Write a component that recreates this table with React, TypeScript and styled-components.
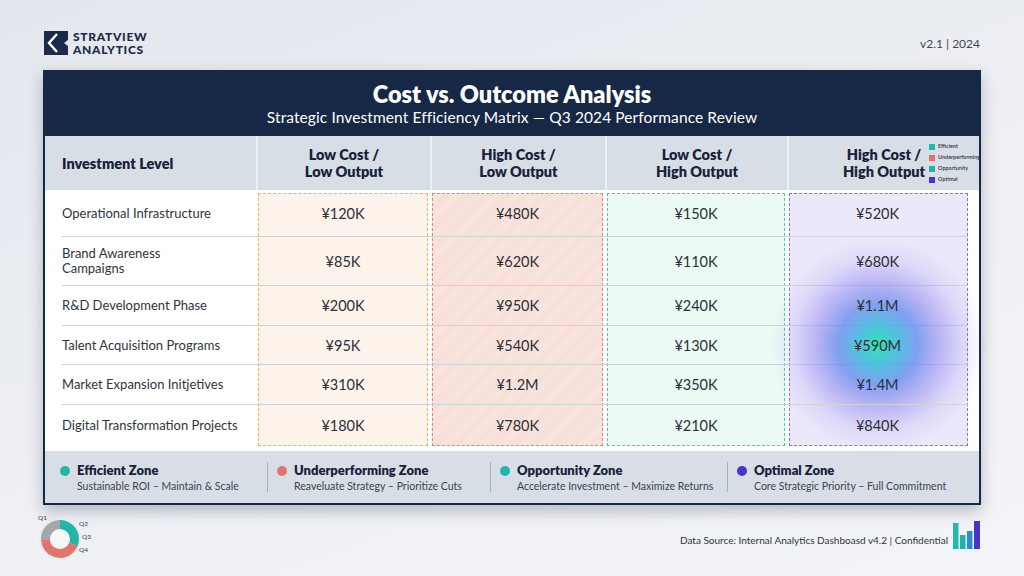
import { Fragment } from "react";
import styled, { createGlobalStyle } from "styled-components";

const GlobalStyle = createGlobalStyle`
  html, body {
    margin: 0;
    padding: 0;
  }
  body {
    font-family: "Lato", "Open Sans", sans-serif;
    background: linear-gradient(160deg, #e3e7ee 0%, #eef0f4 55%, #f3f4f7 100%);
  }
`;

const Page = styled.div`
  width: 1024px;
  height: 576px;
  box-sizing: border-box;
  padding: 30px 43px 0 43px;
  display: flex;
  flex-direction: column;
  overflow: hidden;
`;

const TopBar = styled.div`
  display: flex;
  justify-content: space-between;
  align-items: center;
  height: 25px;
  padding-left: 1px;
`;

const Brand = styled.div`
  display: flex;
  align-items: center;
  gap: 5px;
`;

const BrandName = styled.div`
  font-weight: 900;
  font-size: 12px;
  line-height: 13px;
  color: #1b2a48;
  letter-spacing: 0.7px;
`;

const Version = styled.div`
  font-size: 12px;
  color: #3f4652;
  padding-right: 1px;
  padding-top: 1px;
`;

const Card = styled.div`
  margin-top: 15px;
  border: 2px solid #172746;
  background: #ffffff;
  box-shadow: 0 6px 14px rgba(30, 40, 70, 0.28);
  display: flex;
  flex-direction: column;
`;

const CardHead = styled.div`
  background: #172746;
  color: #ffffff;
  text-align: center;
  padding: 9px 0 9px;
`;

const Title = styled.div`
  font-weight: 800;
  font-size: 23.5px;
  line-height: 26px;
`;

const Subtitle = styled.div`
  font-size: 15.5px;
  line-height: 20px;
  letter-spacing: 0.1px;
`;

const COLS = "211px 174px 175px 182px 1fr";

const HeadRow = styled.div`
  display: grid;
  grid-template-columns: ${COLS};
  background: #d8dee5;
  height: 54px;
`;

const HeadCell = styled.div<{ $first?: boolean }>`
  position: relative;
  display: flex;
  align-items: center;
  justify-content: ${(p) => (p.$first ? "flex-start" : "center")};
  padding-left: ${(p) => (p.$first ? "17px" : "0")};
  border-left: ${(p) => (p.$first ? "none" : "2px solid #eef1f4")};
  font-weight: 800;
  font-size: 14.5px;
  line-height: 17px;
  color: #18223a;
  text-align: center;
`;

const MiniLegend = styled.div`
  position: absolute;
  left: 140px;
  top: 7px;
  display: flex;
  flex-direction: column;
  gap: 4px;
`;

const MiniItem = styled.div`
  display: flex;
  align-items: center;
  gap: 3px;
  font-size: 5.5px;
  line-height: 7px;
  font-weight: 600;
  color: #2d3344;
  white-space: nowrap;
  text-align: left;
`;

const MiniSwatch = styled.span<{ $c: string }>`
  width: 6px;
  height: 6px;
  background: ${(p) => p.$c};
  flex: none;
`;

const Body = styled.div`
  display: grid;
  grid-template-columns: ${COLS};
  grid-template-rows: 47px 49px 40px 39px 40px 40px;
  padding-bottom: 6px;
`;

type Zone = "low" | "bad" | "opp" | "opt";

const zoneStyle: Record<Zone, { bg: string; line: string }> = {
  low: { bg: "#fdf3ea", line: "#f3b546" },
  bad: {
    bg: "repeating-linear-gradient(135deg, #f9e3dd 0 7px, #f8e0da 7px 14px)",
    line: "#e7847a",
  },
  opp: { bg: "#ebfbf4", line: "#45cdb9" },
  opt: { bg: "#ece8fb", line: "#8c6de2" },
};

const ZoneBox = styled.div<{ $zone: Zone; $col: number }>`
  grid-column: ${(p) => p.$col};
  grid-row: 1 / -1;
  margin: 3px ${(p) => (p.$col === 5 ? "11px" : "2px")} -1px 2px;
  background: ${(p) => zoneStyle[p.$zone].bg};
  border: 1.5px dashed ${(p) => zoneStyle[p.$zone].line};
`;

const LabelCell = styled.div<{ $row: number; $last?: boolean }>`
  grid-column: 1;
  grid-row: ${(p) => p.$row};
  margin-left: 17px;
  display: flex;
  align-items: center;
  font-size: 13px;
  line-height: 15px;
  color: #30343c;
  border-bottom: ${(p) => (p.$last ? "none" : "1.5px solid #cfd4da")};
`;

const ValueCell = styled.div<{ $row: number; $col: number; $last?: boolean; $glow?: boolean }>`
  grid-column: ${(p) => p.$col};
  grid-row: ${(p) => p.$row};
  position: relative;
  display: flex;
  align-items: center;
  justify-content: center;
  font-size: 14.5px;
  color: #2b2f38;
  border-bottom: ${(p) => (p.$last ? "none" : "1.5px solid #cfd4da")};
  margin-right: ${(p) => (p.$col === 5 ? "11px" : "0")};

  ${(p) =>
    p.$glow &&
    `
    &::before {
      content: "";
      position: absolute;
      z-index: 0;
      left: 50%;
      top: 50%;
      width: 220px;
      height: 220px;
      transform: translate(-50%, -50%);
      border-radius: 50%;
      background: radial-gradient(circle at center,
        rgba(40, 228, 170, 0.95) 0px,
        rgba(55, 185, 220, 0.85) 20px,
        rgba(80, 125, 235, 0.68) 40px,
        rgba(110, 105, 235, 0.4) 62px,
        rgba(135, 120, 235, 0.15) 85px,
        rgba(140, 120, 235, 0) 108px);
      pointer-events: none;
    }
  `}
`;

const ValueText = styled.span`
  position: relative;
  z-index: 1;
`;

const Legend = styled.div`
  display: grid;
  grid-template-columns: 222px 223px 237px 1fr;
  align-items: center;
  background: #d8dee5;
  height: 52px;
`;

const LegendItem = styled.div<{ $first?: boolean }>`
  display: flex;
  align-items: flex-start;
  gap: 7px;
  height: 30px;
  box-sizing: border-box;
  padding-left: ${(p) => (p.$first ? "15px" : "9px")};
  border-left: ${(p) => (p.$first ? "none" : "1.5px solid #a9b0ba")};
  padding-top: 1px;
`;

const Dot = styled.span<{ $c: string }>`
  width: 10px;
  height: 10px;
  border-radius: 50%;
  background: ${(p) => p.$c};
  margin-top: 3px;
  flex: none;
`;

const LegendTitle = styled.div`
  font-weight: 800;
  font-size: 13px;
  line-height: 15px;
  color: #18223a;
`;

const LegendSub = styled.div`
  font-size: 10.5px;
  line-height: 14px;
  color: #3d4350;
  margin-top: 1px;
`;

const Footer = styled.div`
  display: flex;
  justify-content: space-between;
  align-items: flex-start;
  margin-top: 8px;
  margin-left: -6px;
`;

const SourceRow = styled.div`
  display: flex;
  align-items: flex-end;
  gap: 5px;
  margin-top: 8px;
`;

const Source = styled.div`
  font-size: 10px;
  color: #2f3440;
  padding-bottom: 3px;
`;

const rows = [
  { label: ["Operational Infrastructure"], v: ["¥120K", "¥480K", "¥150K", "¥520K"] },
  { label: ["Brand Awareness", "Campaigns"], v: ["¥85K", "¥620K", "¥110K", "¥680K"] },
  { label: ["R&D Development Phase"], v: ["¥200K", "¥950K", "¥240K", "¥1.1M"] },
  { label: ["Talent Acquisition Programs"], v: ["¥95K", "¥540K", "¥130K", "¥590M"] },
  { label: ["Market Expansion Initjetives"], v: ["¥310K", "¥1.2M", "¥350K", "¥1.4M"] },
  { label: ["Digital Transformation Projects"], v: ["¥180K", "¥780K", "¥210K", "¥840K"] },
];

const zones: Zone[] = ["low", "bad", "opp", "opt"];

const legend = [
  { c: "#22b5a6", t: "Efficient Zone", s: "Sustainable ROI – Maintain & Scale" },
  { c: "#e07570", t: "Underperforming Zone", s: "Reaveluate Strategy – Prioritize Cuts" },
  { c: "#22b5ad", t: "Opportunity Zone", s: "Accelerate Investment – Maximize Returns" },
  { c: "#4b33c9", t: "Optimal Zone", s: "Core Strategic Priority – Full Commitment" },
];

const mini = [
  { c: "#21b9aa", t: "Efficient" },
  { c: "#e2736b", t: "Underperforming" },
  { c: "#20b3ad", t: "Opportunity" },
  { c: "#4a34c8", t: "Optimal" },
];

function Logo() {
  return (
    <svg width="24" height="24" viewBox="0 0 24 24">
      <path d="M0 0 H24 V9 L20 12 L24 15 V24 H0 Z" fill="#1b2a48" />
      <path d="M13 3 L5 12 L13 21" fill="none" stroke="#ffffff" strokeWidth="2.4" strokeLinejoin="miter" />
    </svg>
  );
}

function Donut() {
  const r = 14.5;
  const c = 2 * Math.PI * r;
  const seg = (from: number, to: number, color: string) => (
    <circle
      cx="23"
      cy="26"
      r={r}
      fill="none"
      stroke={color}
      strokeWidth="9"
      strokeDasharray={`${((to - from) / 360) * c} ${c}`}
      transform={`rotate(${from - 90} 23 26)`}
    />
  );
  return (
    <svg width="62" height="48" viewBox="0 0 62 48">
      <circle cx="23" cy="26" r="20" fill="#f6f7f9" stroke="#e2e5ea" strokeWidth="1" />
      {seg(0, 112, "#22b5a6")}
      {seg(112, 268, "#e07570")}
      {seg(268, 360, "#a3a6ab")}
      <text x="1" y="7" fontSize="6.5" fill="#3a3f48" fontFamily="Lato, sans-serif">Q1</text>
      <text x="42" y="13" fontSize="6.5" fill="#3a3f48" fontFamily="Lato, sans-serif">Q2</text>
      <text x="45" y="26" fontSize="6.5" fill="#3a3f48" fontFamily="Lato, sans-serif">Q3</text>
      <text x="42" y="39" fontSize="6.5" fill="#3a3f48" fontFamily="Lato, sans-serif">Q4</text>
    </svg>
  );
}

function Bars() {
  return (
    <svg width="28" height="28" viewBox="0 0 28 28">
      <rect x="0" y="2" width="5.5" height="26" fill="#22b8aa" />
      <rect x="7" y="14" width="5.5" height="14" fill="#22b0a8" />
      <rect x="14" y="10" width="5.5" height="18" fill="#2a8fcf" />
      <rect x="21" y="0" width="6" height="28" fill="#4a34c8" />
    </svg>
  );
}

export default function App() {
  return (
    <>
      <GlobalStyle />
      <Page>
        <TopBar>
          <Brand>
            <Logo />
            <BrandName>
              STRATVIEW
              <br />
              ANALYTICS
            </BrandName>
          </Brand>
          <Version>v2.1 | 2024</Version>
        </TopBar>

        <Card>
          <CardHead>
            <Title>Cost vs. Outcome Analysis</Title>
            <Subtitle>Strategic Investment Efficiency Matrix — Q3 2024 Performance Review</Subtitle>
          </CardHead>

          <HeadRow>
            <HeadCell $first>Investment Level</HeadCell>
            <HeadCell>
              Low Cost /<br />Low Output
            </HeadCell>
            <HeadCell>
              High Cost /<br />Low Output
            </HeadCell>
            <HeadCell>
              Low Cost /<br />High Output
            </HeadCell>
            <HeadCell>
              High Cost /<br />High Output
              <MiniLegend>
                {mini.map((m) => (
                  <MiniItem key={m.t}>
                    <MiniSwatch $c={m.c} />
                    {m.t}
                  </MiniItem>
                ))}
              </MiniLegend>
            </HeadCell>
          </HeadRow>

          <Body>
            {zones.map((z, i) => (
              <ZoneBox key={z} $zone={z} $col={i + 2} />
            ))}
            {rows.map((r, ri) => (
              <Fragment key={ri}>
                <LabelCell $row={ri + 1} $last={ri === rows.length - 1}>
                  <span>
                    {r.label.map((part, pi) => (
                      <Fragment key={pi}>
                        {pi > 0 && <br />}
                        {part}
                      </Fragment>
                    ))}
                  </span>
                </LabelCell>
                {r.v.map((v, ci) => (
                  <ValueCell
                    key={ci}
                    $row={ri + 1}
                    $col={ci + 2}
                    $last={ri === rows.length - 1}
                    $glow={ri === 3 && ci === 3}
                  >
                    <ValueText>{v}</ValueText>
                  </ValueCell>
                ))}
              </Fragment>
            ))}
          </Body>

          <Legend>
            {legend.map((l, i) => (
              <LegendItem key={l.t} $first={i === 0}>
                <Dot $c={l.c} />
                <div>
                  <LegendTitle>{l.t}</LegendTitle>
                  <LegendSub>{l.s}</LegendSub>
                </div>
              </LegendItem>
            ))}
          </Legend>
        </Card>

        <Footer>
          <Donut />
          <SourceRow>
            <Source>Data Source: Internal Analytics Dashboasd v4.2 | Confidential</Source>
            <Bars />
          </SourceRow>
        </Footer>
      </Page>
    </>
  );
}
